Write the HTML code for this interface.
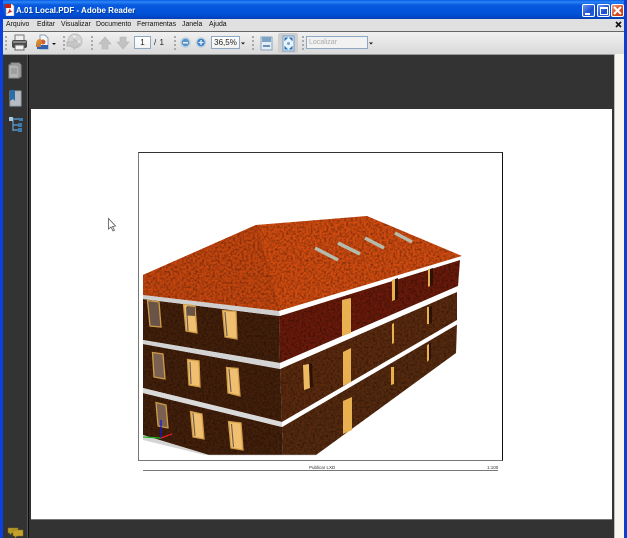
<!DOCTYPE html>
<html><head><meta charset="utf-8"><style>
html,body{margin:0;padding:0;width:627px;height:538px;overflow:hidden;background:#333}
body{position:relative;font-family:"Liberation Sans",sans-serif}
div{position:absolute;box-sizing:border-box}
#all{left:0;top:0;width:627px;height:538px;filter:blur(.35px);overflow:hidden}
.m{top:20px;font-size:6.9px;color:#111;white-space:nowrap;line-height:10px}
.d{width:2px;top:36px;height:15px;background:repeating-linear-gradient(#aaa 0 2px,transparent 2px 4px)}
.b{background:linear-gradient(#fff,#f2f2f2);border:1px solid #8fa9c4}
.w{top:4px;width:13px;height:13px;border:1px solid #fff;border-radius:2px;background:linear-gradient(135deg,#6d96ee,#1d4fd0 60%,#2a62dc)}
</style></head><body><div id="all">
<div style="left:0;top:0;width:627px;height:19px;background:linear-gradient(#0a5ce6 0,#2a86f5 2px,#0859e0 5px,#0052d8 13px,#0048c8 17px,#003cb0 19px)"></div>
<div style="left:16px;top:5px;font-size:8px;font-weight:bold;color:#fff;line-height:11px;white-space:nowrap;text-shadow:1px 1px 0 #003aa0">A.01 Local.PDF - Adobe Reader</div>
<svg style="position:absolute;left:5px;top:4px" width="10" height="12"><path d="M1 0h6l2 2v10H1z" fill="#fff" stroke="#999" stroke-width=".6"/><rect x="0" y="0" width="6" height="4" fill="#c82010"/><path d="M2 10C4 7 5 5 4 4c2 3 3 4 4 4-3 0-4 1-6 2z" fill="#d0281a"/></svg>
<div class="w" style="left:582px"><div style="left:2px;top:8px;width:5px;height:2px;background:#fff"></div></div>
<div class="w" style="left:597px"><div style="left:2px;top:2px;width:8px;height:8px;border:1px solid #fff;border-top-width:2px"></div></div>
<div class="w" style="left:611px;background:linear-gradient(135deg,#ee9a7c,#d84a20 60%,#c83a14)"><svg style="position:absolute;left:1px;top:1px" width="9" height="9"><path d="M1 1l7 7M8 1L1 8" stroke="#fff" stroke-width="2"/></svg></div>

<div style="left:0;top:0;width:3px;height:538px;background:#0a3fe0"></div>
<div style="left:624px;top:0;width:3px;height:538px;background:#0a3fd0"></div>

<div style="left:3px;top:19px;width:621px;height:12px;background:#e0e0e0"></div>
<div style="left:3px;top:31px;width:621px;height:1px;background:#666"></div>
<div class="m" style="left:6px">Arquivo</div>
<div class="m" style="left:37px">Editar</div>
<div class="m" style="left:61px">Visualizar</div>
<div class="m" style="left:96px">Documento</div>
<div class="m" style="left:137px">Ferramentas</div>
<div class="m" style="left:182px">Janela</div>
<div class="m" style="left:209px">Ajuda</div>
<svg style="position:absolute;left:615px;top:21px" width="8" height="7"><path d="M1 1l5 5M6 1L1 6" stroke="#111" stroke-width="1.6"/></svg>

<div style="left:3px;top:32px;width:621px;height:23px;background:linear-gradient(#f0f0f0,#d8d8d8)"></div>
<div style="left:3px;top:54px;width:621px;height:1px;background:#999"></div>
<div class="d" style="left:5px"></div>
<div class="d" style="left:63px"></div>
<div class="d" style="left:91px"></div>
<div class="d" style="left:174px"></div>
<div class="d" style="left:252px"></div>
<div class="d" style="left:302px"></div>
<div style="left:278px;top:33px;width:20px;height:20px;background:#cfcfcf;border-radius:2px"></div>
<div class="b" style="left:134px;top:36px;width:17px;height:13px;font-size:8px;text-align:center;line-height:11px;color:#222">1</div>
<div style="left:154px;top:38px;font-size:8px;line-height:10px;color:#222;word-spacing:1px">/ 1</div>
<div class="b" style="left:211px;top:36px;width:29px;height:13px;font-size:8px;text-align:center;line-height:11px;color:#222">36,5%</div>
<div class="b" style="left:306px;top:36px;width:62px;height:13px;font-size:7px;line-height:11px;color:#aaa;padding-left:2px;background:#f2f2f2">Localizar</div>

<svg style="position:absolute;left:0;top:32px" width="380" height="23">
<!-- print -->
<path d="M15 3h9v6h-9z" fill="#eee" stroke="#777"/><rect x="12" y="8" width="15" height="8" rx="2" fill="#4a4a4a"/><path d="M15 13h9v5h-9z" fill="#f2f2f2" stroke="#666"/><rect x="13" y="9" width="13" height="2" fill="#888"/>
<!-- create -->
<path d="M40 3h5l3 3v11H40z" fill="#f6f6f6" stroke="#8aa0b8"/><circle cx="43" cy="10" r="2.5" fill="#d06040"/><rect x="37" y="13" width="11" height="4" fill="#3060b0"/><path d="M36 12c0-3 2-5 4-5 2 0 2 3 1 5z" fill="#d8882a"/><path d="M36 12h5v3h-5z" fill="#c87a40"/>
<path d="M52 11h4l-2 2z" fill="#111"/>
<!-- globe -->
<circle cx="75" cy="9" r="7" fill="#d4d4d4" stroke="#c0c0c0"/><path d="M67 10h7v-3l6 5-6 5v-3h-7z" fill="#c8c8c8" stroke="#b8b8b8"/><path d="M72 3l4 1-1 3zM77 8l3 1-1 3z" fill="#eee"/>
<!-- arrows -->
<path d="M105 5l6 7h-3v5h-6v-5h-3z" fill="#c2c2c2" stroke="#b4b4b4" stroke-width=".6"/>
<path d="M120 5h6v5h3l-6 7-6-7h3z" fill="#c2c2c2" stroke="#b4b4b4" stroke-width=".6"/>
<!-- zoom -->
<circle cx="185.500" cy="10.500" r="4.500" fill="#5b93c6" stroke="#b8cfe2" stroke-width="1.500"/><rect x="183" y="10" width="5" height="1.500" fill="#e8f0f8"/>
<circle cx="201" cy="10.500" r="4.500" fill="#3f7fc4" stroke="#b8cfe2" stroke-width="1.500"/><path d="M198.500 10.500h5M201 8v5" stroke="#e8f0f8" stroke-width="1.300"/>
<path d="M241 10.500h4l-2 2z" fill="#111"/>
<!-- fit width -->
<rect x="261" y="5" width="11" height="13" fill="#e4ecf4" stroke="#8ba4bc"/><rect x="262" y="5" width="9" height="5" fill="#7fa3c5"/><path d="M263 14h7" stroke="#6a90b8" stroke-width="2"/>
<!-- fit page -->
<rect x="283" y="4" width="11" height="15" fill="#e8f2fa" stroke="#6f9cc4"/><path d="M285 6l2 0-2 2zM292 6v2l-2-2zM285 17v-2l2 2zM292 17h-2l2-2z" fill="#2a70b0" stroke="#2a70b0"/><circle cx="288.500" cy="11.500" r="1.500" fill="#6fa5d0"/>
<path d="M369 10.500h4l-2 2z" fill="#111"/>
</svg>

<div style="left:3px;top:55px;width:25px;height:483px;background:#333"></div>
<div style="left:27px;top:55px;width:1px;height:483px;background:#555"></div>
<div style="left:28px;top:55px;width:1px;height:483px;background:#0c0c0c"></div>
<div style="left:29px;top:55px;width:585px;height:483px;background:#333"></div>
<div style="left:614px;top:54px;width:10px;height:484px;background:#f8f6ee;border-left:1px solid #bbb"></div>
<svg style="position:absolute;left:6px;top:60px" width="18" height="75">
<path d="M5 3h8l2 2v12H5z" fill="#a0a0a0" stroke="#8a8a8a"/><path d="M3 5h8l2 2v11H3z" fill="#b4b4b4" stroke="#8f8f8f"/><path d="M5 9h6M5 11h6M5 13h6" stroke="#8a8a8a"/>
<path d="M4 31h11v15H4z" fill="#b6bcc2" stroke="#9aa2a8"/><path d="M4 30h5v11l-2-2-3 2z" fill="#2a6ea8"/>
<path d="M5 59h8M7 60v11M7 65h6M7 70h6" stroke="#5b92c0" stroke-width="1.400"/><rect x="3" y="57" width="4" height="4" fill="#a8c8e0"/><rect x="13" y="58" width="4" height="3" fill="#3c7cb0"/><rect x="12" y="63" width="4" height="4" fill="#3c7cb0"/><rect x="12" y="68" width="4" height="4" fill="#3c7cb0"/>
</svg>
<svg style="position:absolute;left:7px;top:526px" width="18" height="12">
<path d="M1 2h10v5H5L3 9V7H1z" fill="#b89a2a" stroke="#8a7018" stroke-width=".5"/><path d="M6 4h10v6h-6l-2 2v-2H6z" fill="#c4a22e" stroke="#8a7018" stroke-width=".5"/>
</svg>

<div style="left:31px;top:109px;width:581px;height:410px;background:#fff"></div>
<div style="left:31px;top:519px;width:581px;height:1px;background:#777"></div>
<div style="left:138px;top:152px;width:365px;height:309px;border:1px solid #777;border-right-color:#111;border-top-color:#333"></div>
<div style="left:143px;top:470px;width:355px;height:1px;background:#777"></div>
<div style="left:309px;top:465px;font-size:4.500px;line-height:5px;color:#333;white-space:nowrap">Publicar LXD</div>
<div style="left:487px;top:465px;font-size:4.500px;line-height:5px;color:#333;white-space:nowrap">1:100</div>

<svg style="position:absolute;left:0;top:0" width="627" height="538">
<defs>
<filter id="t" x="0" y="0" width="100%" height="100%" color-interpolation-filters="sRGB"><feTurbulence type="fractalNoise" baseFrequency=".45" numOctaves="2" seed="4" result="n"/><feColorMatrix in="n" type="matrix" values="0 0 0 0 0 0 0 0 0 0 0 0 0 0 0 .9 0 0 0 -.35" result="a"/><feComposite in="a" in2="SourceGraphic" operator="in" result="c"/><feMerge><feMergeNode in="SourceGraphic"/><feMergeNode in="c"/></feMerge></filter>
</defs>
<g filter="url(#t)">
<path d="M143 275L256 225L367 216L462 256L279 311L143 295Z" fill="#cf4b10"/>
<path d="M143 275L256 225L279 311L143 295Z" fill="#c4460f"/>
<path d="M143 299L279 316L280 363L143 340Z" fill="#43200b"/>
<path d="M143 344L280 369L282 422L143 388Z" fill="#43200b"/>
<path d="M143 393L282 427L283 455L209 455L143 435Z" fill="#43200b"/>
<path d="M279 316L460 260L458 286L280 363Z" fill="#691a0a"/>
<path d="M280 369L457 292L457 320L282 422Z" fill="#5a2a0f"/>
<path d="M282 427L457 324L456 353L316 455L283 455Z" fill="#552a0f"/>
</g>
<path d="M256 225L279 311" stroke="#8e3108" stroke-width="1.500" opacity=".35"/>
<!-- bands -->
<path d="M143 295L279 311L280 316L143 299Z" fill="#cfcfcf"/>
<path d="M279 311L462 256L460 260L280 316Z" fill="#fff"/>
<path d="M143 340L280 363L280 369L143 344Z" fill="#d4d4d4"/>
<path d="M280 363L458 286L458 291L280 369Z" fill="#fff"/>
<path d="M143 388L282 422L282 427L143 393Z" fill="#dadada"/>
<path d="M282 422L458 320L458 324L282 427Z" fill="#fff"/>
<path d="M143 435L209 455L205 455L143 440Z" fill="#d4d4d4"/>
<path d="M209 455L316 455" stroke="#bbb" stroke-width=".6"/>
<!-- skylights -->
<path d="M315 248L338 260M338 243L360 254M365 238L384 248M395 233L412 242" stroke="#b4bcae" stroke-width="3.500" fill="none"/>
<!-- left windows -->
<g fill="#f0bf70" stroke="#cf9c48" stroke-width="1.300">
<path d="M147.500 300.500L159 302L161 327L150 326Z" fill="#6a5448"/>
<path d="M183.500 304.500L195 306L197 333L186 331Z"/>
<path d="M222.500 310.500L236 311.500L237 339L225 337Z"/>
<path d="M152.500 352.500L163 354L165 379L154 377Z" fill="#7a6050"/>
<path d="M187.500 359.500L199 361L200 387L189 385Z"/>
<path d="M226.500 367.500L238 368.500L240 396L228 393Z"/>
<path d="M156 402.500L166 405L168 428L158 426Z" fill="#7a6050"/>
<path d="M190.500 411.500L202 414L204 439L193 437Z"/>
<path d="M228.500 421.500L241 423L243 450L231 448Z"/>
</g>
<path d="M186.500 307L188 331M225 312L227 336M190 362L191 384M229 369L231 392M193 413L195 436M231.500 424L233.500 447" stroke="#6a5a50" stroke-width="1.100" fill="none"/>
<path d="M187 315.500L195 316V307L187 306Z" fill="#6a5448"/>
<!-- right windows -->
<g fill="#e9b050">
<path d="M342 300L351 298L351 333L342 336Z"/>
<path d="M392 280L395 279L395 300L392 301Z"/>
<path d="M428 269L430 269L430 286L428 287Z"/>
<path d="M427 307L429 307L429 324L427 324Z"/>
<path d="M303 365L309 364L310 388L304 390Z" fill="#efbb62"/>
<path d="M343 352L351 348L351 382L343 386Z"/>
<path d="M392 324L394 323L394 343L392 344Z"/>
<path d="M391 367L394 367L394 384L391 385Z"/>
<path d="M427 345L429 344L429 360L427 362Z"/>
<path d="M343 401L352 397L352 430L343 434Z"/>
</g>
<g fill="#2a1205">
<path d="M395 279L398 278L398 299L395 300Z"/>
<path d="M430 269L433 268L433 285L430 286Z"/>
<path d="M429 307L432 306L432 323L429 324Z"/>
<path d="M429 344L431 343L431 359L429 360Z"/>
<path d="M309 364L312 363L313 387L310 388Z"/>
</g>
<!-- axes -->
<path d="M143 437L161 438" stroke="#20b020" stroke-width="1.200"/>
<path d="M161 420V438" stroke="#1018e0" stroke-width="1.200"/>
<path d="M161 438L172 434" stroke="#e02020" stroke-width="1.200"/>
<!-- cursor -->
<path d="M108.500 218.500V229l2.500-2 2 4 1.500-.8-2-3.700 3-.5Z" fill="#fff" stroke="#555" stroke-width=".8"/>
</svg>
</div></body></html>
